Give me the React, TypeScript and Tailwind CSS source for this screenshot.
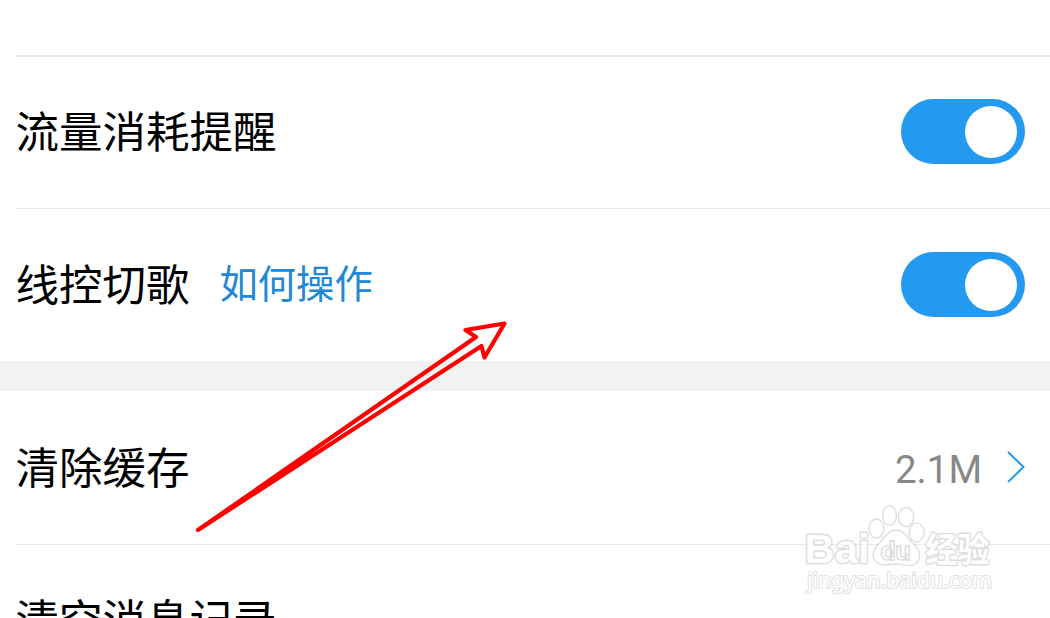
import React, { useState } from "react";

type SwitchProps = { checked: boolean; onChange: () => void; label: string };

function Switch({ checked, onChange, label }: SwitchProps) {
  return (
    <button
      type="button"
      role="switch"
      aria-checked={checked}
      aria-label={label}
      onClick={onChange}
      className={`flex h-[65px] w-[124px] items-center rounded-full px-2 ${
        checked ? "justify-end bg-[#2399ef]" : "justify-start bg-[#d5d5d5]"
      }`}
    >
      <span className="size-[52px] rounded-full bg-white" />
    </button>
  );
}

type RowProps = { title: string; extra?: string; className: string; children?: React.ReactNode };

function Row({ title, extra, className, children }: RowProps) {
  return (
    <div className={`flex shrink-0 items-center justify-between pr-[25px] pl-[15.5px] ${className}`}>
      <div className="flex items-center pb-[3px]">
        <span className="text-[43.5px] leading-none text-black">{title}</span>
        {extra && <a className="ml-[30px] -mt-0.5 text-[38.3px] leading-none text-[#2187d8]">{extra}</a>}
      </div>
      {children}
    </div>
  );
}

function Arrow() {
  return (
    <svg className="pointer-events-none absolute top-0 left-0" width="1050" height="618" fill="none">
      <path
        d="M198 530 L476 337 L465.500 330 L504.500 323.500 L484.500 357.500 L481.500 346 Z"
        stroke="#ff0000"
        strokeWidth="4.200"
        strokeLinejoin="round"
      />
    </svg>
  );
}

// outlined Baidu stamp in the lower right corner
function Watermark() {
  return (
    <svg
      className="pointer-events-none absolute top-[500px] left-[800px]"
      width="200"
      height="105"
      fill="#ffffff"
      stroke="#d8d8d8"
      strokeWidth="1.300"
      opacity="0.85"
    >
      <g strokeWidth="2.800" paintOrder="stroke" strokeLinejoin="round">
        <text x="4.500" y="63" fontSize="41" fontWeight="bold" fontFamily="'Liberation Sans', Arial, sans-serif" textLength="65" lengthAdjust="spacingAndGlyphs">Bai</text>
        <text x="125.500" y="61.500" fontSize="34" fontWeight="bold" fontFamily="'Noto Sans CJK SC', sans-serif" textLength="64" lengthAdjust="spacingAndGlyphs">经验</text>
        <text x="7" y="88" fontSize="22" textLength="185" lengthAdjust="spacingAndGlyphs" stroke="#dedede" strokeWidth="2.200" fontFamily="'Noto Sans', sans-serif">jingyan.baidu.com</text>
      </g>
      <ellipse cx="76.500" cy="28.500" rx="7.500" ry="9.500" />
      <ellipse cx="89.500" cy="15.500" rx="7" ry="9.700" />
      <ellipse cx="106" cy="17" rx="7.700" ry="9.500" />
      <ellipse cx="116.700" cy="32.500" rx="7.500" ry="9.300" />
      <path d="M96 30 C89 30 85 36 82 40 C78 45 73 48 73 55 C73 61 78 65 84 65 C89 65 91 64 96 64 C101 64 105 66 110 65.500 C117 65 120 60 119.500 54 C119 48 113 44 110 40 C107 36 103 30 96 30 Z" />
      <text x="80.500" y="59.500" fontSize="25" fontWeight="bold" fontFamily="Roboto, sans-serif" textLength="30" lengthAdjust="spacingAndGlyphs">du</text>
    </svg>
  );
}

export default function App() {
  const [trafficAlert, setTrafficAlert] = useState(true);
  const [wireControl, setWireControl] = useState(true);

  return (
    <div className="relative flex h-[618px] w-[1050px] flex-col overflow-hidden bg-white font-['Noto_Sans_CJK_SC',sans-serif]">
      <div className="ml-[15px] h-[57px] shrink-0 border-b-2 border-[#e8e8e8]" />
      <Row title="流量消耗提醒" className="h-[151px] pb-0.5">
        <Switch checked={trafficAlert} onChange={() => setTrafficAlert(!trafficAlert)} label="流量消耗提醒" />
      </Row>
      <div className="ml-[15px] h-px shrink-0 bg-[#e8e8e8]" />
      <Row title="线控切歌" extra="如何操作" className="h-[152px] pb-px">
        <Switch checked={wireControl} onChange={() => setWireControl(!wireControl)} label="线控切歌" />
      </Row>
      <div className="h-[30px] shrink-0 bg-[#f2f2f2]" />
      <Row title="清除缓存" className="h-[153px] pb-px">
        <div className="flex items-center">
          <span className="mt-1.5 mr-[25px] font-['Roboto',sans-serif] text-[38.5px] leading-none text-[#888888]">2.1M</span>
          <svg width="18" height="32" viewBox="0 0 18 32" fill="none" stroke="#2399ef" strokeWidth="2">
            <path d="M1 1 L16.500 16 L1 31" />
          </svg>
        </div>
      </Row>
      <div className="ml-[15px] h-px shrink-0 bg-[#e8e8e8]" />
      <Row title="清空消息记录" className="h-[152px] pb-1" />
      <Watermark />
      <Arrow />
    </div>
  );
}
